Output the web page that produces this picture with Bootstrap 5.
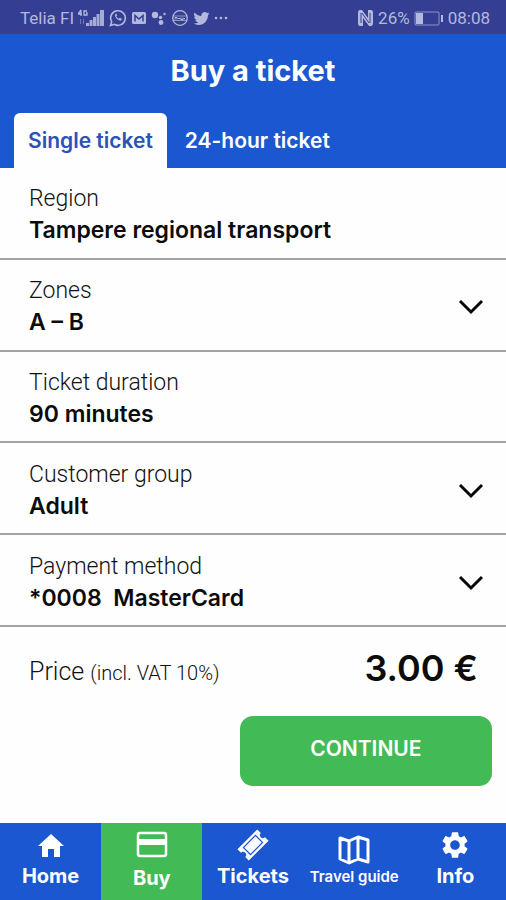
<!DOCTYPE html>
<html lang="en">
<head>
<meta charset="utf-8">
<meta name="viewport" content="width=device-width, initial-scale=1">
<title>Buy a ticket</title>
<link href="https://cdn.jsdelivr.net/npm/bootstrap@5.3.0/dist/css/bootstrap.min.css" rel="stylesheet">
<style>
  :root { --brand: #1b57d0; --brand-dark: #343f93; --go: #42bb56; --status-ink: #b3b8de; }
  body { font-family: Inter, "Open Sans", sans-serif; color: #0c0c0c; background: #fefefe; }
  .status-bar { height: 34px; background: var(--brand-dark); color: var(--status-ink); font: 17px/20px Roboto, sans-serif; padding: 2px 16px 0 20px; }
  .status-bar svg { display: block; flex: none; }
  .app-header { background: var(--brand); color: #fff; }
  .app-title { font-size: 29px; line-height: 34px; font-weight: 700; margin: 0; padding: 20px 0 25px; }
  .ticket-tabs { padding: 0 14px; gap: 4px; border: 0; }
  .ticket-tabs .nav-link { border: 0; border-radius: 6px 6px 0 0; font-size: 21px; line-height: 24px; font-weight: 600; padding: 16px 14px; color: #fff; }
  .ticket-tabs .nav-link.active { background: #fefefe; color: #2a52b8; }
  .field-row { border-bottom: 2px solid #a3a3a3; padding: 3px 20px 0 29px; }
  .field-name { font: 300 23px/32px Roboto, sans-serif; color: #111; }
  .field-value { font-size: 23px; line-height: 30px; font-weight: 600; color: #0c0c0c; }
  select.field-value { border: 0; padding: 0; height: 30px; background: none; appearance: none; }
  .price-area { padding: 20px 14px 37px 29px; }
  .price-label { font: 300 25px/34px Roboto, sans-serif; color: #111; padding-top: 8px; }
  .price-note { font-size: 20px; }
  .price-total { font-size: 36px; line-height: 42px; font-weight: 600; padding-right: 14px; }
  .btn-go { background: var(--go); color: #fff; border: 0; border-radius: 13px; width: 54.5%; padding: 20px 12px 25px; margin-top: 26px; font-size: 21px; line-height: 25px; font-weight: 600; }
  .btn-go:hover, .btn-go:active { background: #38a84b !important; color: #fff !important; }
  .tab-bar { background: var(--brand); height: 77px; }
  .tab-bar a { color: #fff; text-decoration: none; font-size: 20px; line-height: 26px; font-weight: 700; flex: 1 1 0; padding-top: 6px; gap: 2px; }
  .tab-bar a.current { background: var(--go); gap: 4px; }
  .tab-bar svg { flex: none; }
  .tab-bar .long-name { font-size: 15px; line-height: 20px; font-weight: 600; white-space: nowrap; }
</style>
</head>
<body>
<div class="min-vh-100 d-flex flex-column">
  <div class="status-bar d-flex align-items-center justify-content-between">
    <div class="d-flex align-items-center">
      <span>Telia FI</span>
      <svg width="27" height="18" viewBox="0 0 27 18" fill="currentColor" class="ms-1" aria-hidden="true">
        <path d="M3 1L0 5h4M3 1v6M9 2H6v4h3V4H8" fill="none" stroke="currentColor" stroke-width="1.3"/>
        <path d="M2 10h1v5H2zM5 10h1v5H5z" opacity=".5"/>
        <path d="M8 14h3v3H8zM11.500 11h3v6h-3zM15 8h3v9h-3zM18.500 5h3v12h-3zM22 1h4v16h-4z" opacity=".9"/>
      </svg>
      <svg width="18" height="18" viewBox="0 0 18 18" fill="none" stroke="currentColor" class="ms-1" aria-hidden="true">
        <path d="M1.5 16.5l1.2-3.8A7.3 7.3 0 1 1 5.3 15.300z" stroke-width="1.6"/>
        <path d="M6.300 5.200c-1.600 2.200 3.200 7.400 6 6.100l.5-1.500-2-1-1 1c-1.200-.5-2-1.300-2.500-2.500l.9-1-.8-1.900z" fill="currentColor" stroke="none"/>
      </svg>
      <svg width="16" height="14" viewBox="0 0 16 14" class="ms-1" aria-hidden="true">
        <rect x="1" y="1" width="14" height="12" rx="1.500" fill="currentColor"/>
        <path d="M4 10.500V4.500L8 8l4-3.500v6" fill="none" stroke="#343f93" stroke-width="1.500"/>
      </svg>
      <svg width="16" height="16" viewBox="0 0 16 16" fill="currentColor" class="ms-1" aria-hidden="true">
        <circle cx="4" cy="5" r="3.200"/><circle cx="9.500" cy="7.500" r="1.700"/><circle cx="13.500" cy="4" r="1.200"/><circle cx="10" cy="12.500" r="2.400"/>
      </svg>
      <svg width="18" height="18" viewBox="0 0 18 18" fill="none" stroke="currentColor" class="ms-1" aria-hidden="true">
        <circle cx="9" cy="9" r="7.300" stroke-width="1.300"/><path d="M2 7h14M2 11.500h14" stroke-width=".7"/><path d="M4 10.500v-2h2v2m1-1h2v1m1-2v2h2v-2m1 2v-1h1" stroke-width="1"/>
      </svg>
      <svg width="17" height="16" viewBox="0 0 16 16" fill="currentColor" class="ms-1" aria-hidden="true">
        <path d="M5.026 15c6.038 0 9.341-5.003 9.341-9.334 0-.14 0-.282-.006-.422A6.685 6.685 0 0 0 16 3.542a6.658 6.658 0 0 1-1.889.518 3.301 3.301 0 0 0 1.447-1.817 6.533 6.533 0 0 1-2.087.793A3.286 3.286 0 0 0 7.875 6.030a9.325 9.325 0 0 1-6.767-3.429 3.289 3.289 0 0 0 1.018 4.382A3.323 3.323 0 0 1 .64 6.575v.045a3.288 3.288 0 0 0 2.632 3.218 3.203 3.203 0 0 1-.865.115 3.230 3.230 0 0 1-.614-.057 3.283 3.283 0 0 0 3.067 2.277A6.588 6.588 0 0 1 .78 13.580a6.320 6.320 0 0 1-.78-.045A9.344 9.344 0 0 0 5.026 15z"/>
      </svg>
      <svg width="14" height="4" viewBox="0 0 14 4" fill="currentColor" class="ms-1" aria-hidden="true"><circle cx="2" cy="2" r="1.300"/><circle cx="7" cy="2" r="1.300"/><circle cx="12" cy="2" r="1.300"/></svg>
    </div>
    <div class="d-flex align-items-center">
      <svg width="17" height="16" viewBox="0 0 17 16" aria-hidden="true">
        <path d="M3 0h2l6 8V0h3q2 0 2 3v10q0 3-2 3h-2L6 8v8H3q-2 0-2-3V3q0-3 2-3z" fill="currentColor"/>
        <path d="M4 3v10M13 3v10M5 3l7 10" stroke="#343f93" fill="none"/>
      </svg>
      <span class="ms-1">26%</span>
      <svg width="30" height="15" viewBox="0 0 30 15" class="mx-1" aria-hidden="true">
        <rect x="1" y="1" width="24" height="13" rx="1" fill="none" stroke="currentColor" opacity=".7"/>
        <path d="M2 2h7v11H2zM27 4h2v7h-2z" fill="currentColor"/>
      </svg>
      <span>08:08</span>
    </div>
  </div>

  <header class="app-header">
    <h1 class="app-title text-center">Buy a ticket</h1>
    <ul class="nav nav-tabs ticket-tabs" role="tablist">
      <li class="nav-item"><button type="button" role="tab" aria-selected="true" class="nav-link active">Single ticket</button></li>
      <li class="nav-item"><button type="button" role="tab" aria-selected="false" class="nav-link">24-hour ticket</button></li>
    </ul>
  </header>

  <form class="flex-grow-1 d-flex flex-column">
    <div class="field-row flex-fill d-flex flex-column justify-content-center">
      <div class="field-name">Region</div>
      <div class="field-value">Tampere regional transport</div>
    </div>
    <div class="field-row flex-fill d-flex align-items-center">
      <div class="flex-grow-1 d-flex flex-column">
        <label class="field-name" for="zones">Zones</label>
        <select class="field-value" id="zones"><option>A – B</option></select>
      </div>
      <svg width="30" height="20" viewBox="0 0 30 20" fill="none" stroke="#080808" stroke-width="3" aria-hidden="true"><path d="M4 5l11 11L26 5"/></svg>
    </div>
    <div class="field-row flex-fill d-flex flex-column justify-content-center">
      <div class="field-name">Ticket duration</div>
      <div class="field-value">90 minutes</div>
    </div>
    <div class="field-row flex-fill d-flex align-items-center">
      <div class="flex-grow-1 d-flex flex-column">
        <label class="field-name" for="group">Customer group</label>
        <select class="field-value" id="group"><option>Adult</option></select>
      </div>
      <svg width="30" height="20" viewBox="0 0 30 20" fill="none" stroke="#080808" stroke-width="3" aria-hidden="true"><path d="M4 5l11 11L26 5"/></svg>
    </div>
    <div class="field-row flex-fill d-flex align-items-center">
      <div class="flex-grow-1 d-flex flex-column">
        <label class="field-name" for="payment">Payment method</label>
        <select class="field-value" id="payment"><option>*0008&nbsp; MasterCard</option></select>
      </div>
      <svg width="30" height="20" viewBox="0 0 30 20" fill="none" stroke="#080808" stroke-width="3" aria-hidden="true"><path d="M4 5l11 11L26 5"/></svg>
    </div>
    <div class="price-area d-flex flex-column">
      <div class="d-flex justify-content-between">
        <div class="price-label">Price <span class="price-note">(incl. VAT 10%)</span></div>
        <div class="price-total">3.00 €</div>
      </div>
      <button type="submit" class="btn btn-go align-self-end">CONTINUE</button>
    </div>
  </form>

  <nav class="tab-bar d-flex" aria-label="Main">
    <a href="#home" class="d-flex flex-column align-items-center">
      <svg width="30" height="32" viewBox="0 0 30 32" fill="currentColor" aria-hidden="true"><path d="M15 5l13 12h-4v11h-6v-8h-6v8H6V17H2z"/></svg>
      Home
    </a>
    <a href="#buy" class="current d-flex flex-column align-items-center" aria-current="page">
      <svg width="34" height="32" viewBox="0 0 34 32" aria-hidden="true"><rect x="3" y="4" width="28" height="23" rx="2" fill="none" stroke="currentColor" stroke-width="2.500"/><path d="M3 10h28v6H3z" fill="currentColor"/></svg>
      Buy
    </a>
    <a href="#tickets" class="d-flex flex-column align-items-center">
      <svg width="34" height="32" viewBox="0 0 34 32" aria-hidden="true">
        <g transform="rotate(-45 17 16)"><path d="M3 8h28v5a3 3 0 0 0 0 6v5H3v-5a3 3 0 0 0 0-6z" fill="currentColor"/><path d="M8.500 11h17v10h-17z" fill="none" stroke="#1b57d0" stroke-width="1.200"/></g>
      </svg>
      Tickets
    </a>
    <a href="#guide" class="d-flex flex-column align-items-center">
      <svg width="36" height="36" viewBox="0 0 36 36" fill="none" stroke="currentColor" stroke-width="3" stroke-linejoin="round" aria-hidden="true"><path d="M4 9l9 3 9-4 10 3v22l-10-3-9 4-9-4zM13 12v22M22 8v22"/></svg>
      <span class="long-name">Travel guide</span>
    </a>
    <a href="#info" class="d-flex flex-column align-items-center">
      <svg width="32" height="32" viewBox="0 0 24 24" fill="currentColor" aria-hidden="true"><path d="M19.140 12.940c.04-.3.06-.61.06-.94 0-.32-.02-.64-.07-.94l2.030-1.580c.18-.14.23-.41.12-.61l-1.920-3.320c-.12-.22-.37-.29-.59-.22l-2.390.96c-.5-.38-1.030-.7-1.620-.94l-.36-2.540c-.04-.24-.24-.41-.48-.41h-3.840c-.24 0-.43.17-.47.41l-.36 2.540c-.59.24-1.130.57-1.620.94l-2.390-.96c-.22-.08-.47 0-.59.22L2.740 8.870c-.12.21-.08.47.12.61l2.030 1.580c-.05.3-.09.63-.09.94s.02.64.07.94l-2.030 1.580c-.18.14-.23.41-.12.61l1.920 3.320c.12.22.37.29.59.22l2.390-.96c.5.38 1.030.7 1.620.94l.36 2.540c.05.24.24.41.48.41h3.840c.24 0 .44-.17.47-.41l.36-2.540c.59-.24 1.130-.56 1.620-.94l2.390.96c.22.08.47 0 .59-.22l1.920-3.320c.12-.22.07-.47-.12-.61l-2.010-1.580zM12 15.600c-1.980 0-3.600-1.620-3.600-3.600s1.620-3.600 3.600-3.600 3.600 1.620 3.600 3.600-1.620 3.600-3.600 3.600z"/></svg>
      Info
    </a>
  </nav>
</div>
<script src="https://cdn.jsdelivr.net/npm/bootstrap@5.3.0/dist/js/bootstrap.bundle.min.js"></script>
</body>
</html>
